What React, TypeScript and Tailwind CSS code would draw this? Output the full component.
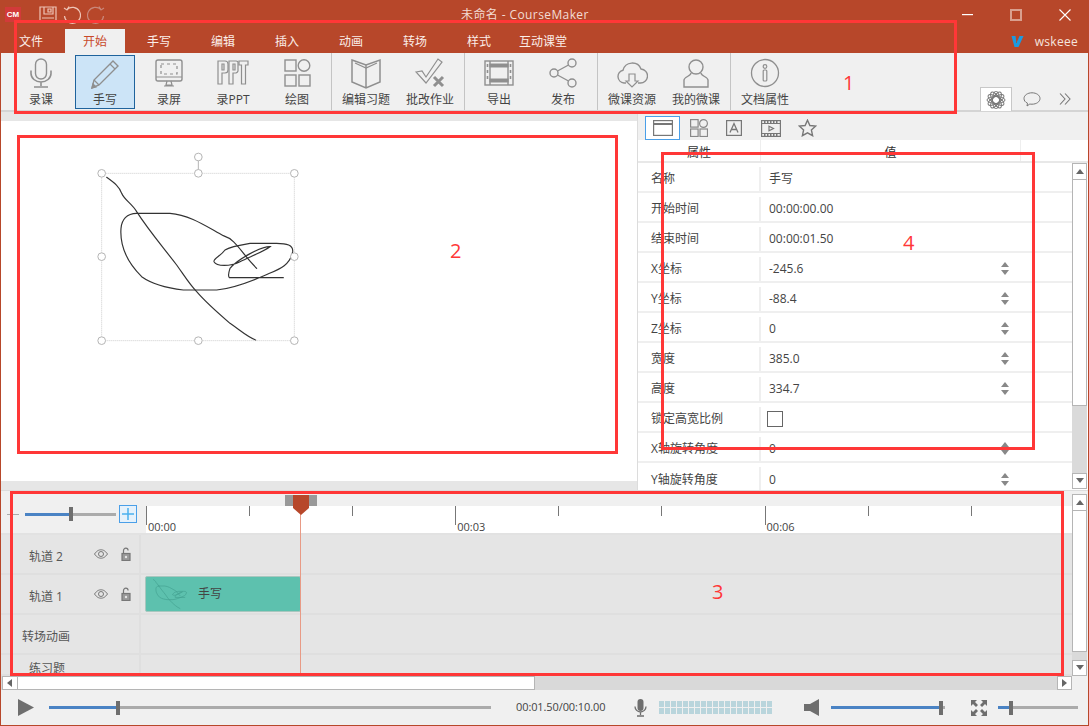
import React from "react";

const S = "#8f8f8f";
const Ico = ({ children, w = 32, h = 32, className = "" }: { children: React.ReactNode; w?: number; h?: number; className?: string }) => (
  <svg width={w} height={h} viewBox={`0 0 ${w} ${h}`} fill="none" stroke={S} strokeWidth="1.2" className={className}>{children}</svg>
);

const icons: Record<string, React.ReactNode> = {
  mic: <Ico><rect x="10.5" y="2" width="11" height="20" rx="5.5" strokeWidth="1.4" /><path d="M6 13.5v3a10 8.5 0 0 0 20 0v-3M16 25v4M9 30h14" strokeWidth="1.6" /></Ico>,
  pen: <Ico><path d="M3 31l2-8L24 4l5 5-19 19z" strokeWidth="1.4" /><path d="M21 7l5 5M5 23l5 5" /><path d="M3 31l1-4 3 3z" fill={S} /></Ico>,
  screen: <Ico><rect x="3" y="3" width="26" height="21" rx="2" strokeWidth="1.4" /><path d="M3 20h26M14 24l-1 4h6l-1-4M11 29h10" /><rect x="8" y="7" width="16" height="10" strokeDasharray="3 3" /></Ico>,
  ppt: <Ico><g transform="translate(1 4)"><path d="M0 0h7a3 3 0 0 1 3 3v6a3 3 0 0 1-3 3H4v11H0zM4 3v6h2V3z" /><path d="M11 0h7a3 3 0 0 1 2 1v9a3 3 0 0 1-2 2h-3v11h-4zM15 3v6h2V3z" /><path d="M21 0h9v4h-2.500v19h-4V4H21z" /></g></Ico>,
  draw: <Ico><rect x="4" y="3" width="11" height="11" strokeWidth="1.4" /><circle cx="23" cy="8.5" r="5.8" strokeWidth="1.4" /><rect x="4" y="18" width="11" height="11" strokeWidth="1.4" /><rect x="18" y="18" width="11" height="11" strokeWidth="1.4" /></Ico>,
  book: <Ico><path d="M2 3l14 5 14-5v22l-14 6-14-6zM16 8v23" strokeWidth="1.5" /><path d="M5 6l11 5 11-5" /></Ico>,
  check: <Ico><path d="M2 15l6-1 4 6L24 2l4 3-16 21z" strokeWidth="1.2" /><path d="M20 20l9 9M29 20l-9 9" strokeWidth="3" /></Ico>,
  film: <Ico><rect x="2" y="4" width="28" height="24" strokeWidth="1.4" /><path d="M7 4v24M25 4v24" strokeWidth="1.4" /><path d="M7 7h18v3H7z" fill={S} /><path d="M7 22h18v3H7z" fill={S} /><path d="M4.5 7v18M27.5 7v18" strokeDasharray="3 3" strokeWidth="1.6" /></Ico>,
  share: <Ico><circle cx="25" cy="6" r="4" strokeWidth="1.4" /><circle cx="7" cy="16" r="4" strokeWidth="1.4" /><circle cx="25" cy="26" r="4" strokeWidth="1.4" /><path d="M10.5 14l11-6M10.5 18l11 6" strokeWidth="1.4" /></Ico>,
  cloud: <Ico><path d="M10 26H8a6.5 6.5 0 0 1-1-12.8A9.5 9.5 0 0 1 25 12a7 7 0 0 1-1 14h-2" strokeWidth="1.4" /><path d="M13 17h6v7h3l-6 6-6-6h3z" strokeWidth="1.2" /></Ico>,
  user: <Ico><circle cx="16" cy="10" r="7" strokeWidth="1.4" /><path d="M11 16c0 3-7 4-7 7v7h24v-7c0-3-7-4-7-7" strokeWidth="1.4" /></Ico>,
  info: <Ico><circle cx="16" cy="16" r="13.5" strokeWidth="1.3" /><circle cx="16" cy="9.5" r="1.8" /><rect x="14.2" y="13" width="3.6" height="11" rx="1" /></Ico>,
};

const ribbonGroups = [
  [["mic", "录课"], ["pen", "手写"], ["screen", "录屏"], ["ppt", "录PPT"], ["draw", "绘图"]],
  [["book", "编辑习题"], ["check", "批改作业"]],
  [["film", "导出"], ["share", "发布"]],
  [["cloud", "微课资源"], ["user", "我的微课"]],
  [["info", "文档属性"]],
];

const rows: [string, string, boolean?][] = [
  ["名称", "手写"],
  ["开始时间", "00:00:00.00"],
  ["结束时间", "00:00:01.50"],
  ["X坐标", "-245.6", true],
  ["Y坐标", "-88.4", true],
  ["Z坐标", "0", true],
  ["宽度", "385.0", true],
  ["高度", "334.7", true],
  ["锁定高宽比例", "check"],
  ["X轴旋转角度", "0", true],
  ["Y轴旋转角度", "0", true],
];

const Tri = ({ dir, c = "#666" }: { dir: "u" | "d" | "l" | "r"; c?: string }) => {
  const p = { u: "0,6 4,1 8,6", d: "0,1 8,1 4,6", l: "6,0 6,8 1,4", r: "1,0 1,8 6,4" }[dir];
  return <svg width="8" height="8" viewBox="0 0 8 8"><polygon points={p} fill={c} /></svg>;
};

const SB = ({ dir, cls = "" }: { dir: "u" | "d" | "l" | "r"; cls?: string }) => (
  <div className={`bg-white border border-[#b5b5b5] flex items-center justify-center shrink-0 ${cls}`}><Tri dir={dir} /></div>
);

const VScroll = ({ thumb, track }: { thumb: string; track: string }) => (
  <div className="w-[15px] flex flex-col h-full shrink-0">
    <SB dir="u" cls="h-[17px]" />
    <div className={`bg-white border-x border-b border-[#b5b5b5] ${thumb}`} />
    <div className={`bg-[#dadada] ${track}`} />
    <SB dir="d" cls="h-[16px]" />
  </div>
);

const Slider = ({ w, pos, h = 3 }: { w: number; pos: number; h?: number }) => (
  <div className="flex items-center relative shrink-0" style={{ width: w, height: 14 }}>
    <div className="bg-[#4a83c4]" style={{ width: pos, height: h }} />
    <div className="bg-[#6e6e6e] w-[4px] h-[14px] shrink-0" />
    <div className="bg-[#ababab] flex-1" style={{ height: h }} />
  </div>
);

const Eye = () => (
  <svg width="14" height="10" viewBox="0 0 14 10" fill="none" stroke="#777" strokeWidth="1"><path d="M.5 5C3 1.5 5 .8 7 .8S11 1.5 13.500 5C11 8.500 9 9.200 7 9.200S3 8.500 .5 5z" /><circle cx="7" cy="5" r="2.500" /></svg>
);
const Lock = () => (
  <svg width="10" height="14" viewBox="0 0 10 14" fill="none" stroke="#777" strokeWidth="1.2"><path d="M2.500 6V3.500a2.300 2.300 0 0 1 4.600 0" /><rect x="1" y="6.500" width="8" height="7" fill="#999" stroke="#777" /><circle cx="5" cy="10" r="1.200" fill="#e5e5e5" stroke="none" /></svg>
);

const Track = ({ label, ctl, children, h = 40 }: { label: string; ctl?: boolean; children?: React.ReactNode; h?: number }) => (
  <div className="flex border-b-2 border-[#dfdfdf] shrink-0 overflow-hidden" style={{ height: h }}>
    <div className={`w-[140px] border-r-2 border-[#dfdfdf] shrink-0 flex items-center text-[12px] text-[#555] ${ctl ? "pl-[28px]" : "pl-[21px]"}`}>
      <span className={ctl ? "w-[65px] mt-[6px]" : label === "练习题" ? "pl-[7px] pt-[9px]" : "mt-[6px]"}>{label}</span>
      {ctl && <><Eye /><span className="ml-[13px] flex"><Lock /></span></>}
    </div>
    <div className="flex-1 flex items-center">{children}</div>
  </div>
);

const Handle = ({ cx, cy }: { cx: number; cy: number }) => <circle cx={cx} cy={cy} r="11.500" fill="white" stroke="#b5b5b5" strokeWidth="3" />;

const Sketch = ({ size = 1, op = 1, color = "#333" }: { size?: number; op?: number; color?: string }) => (
  <g fill="none" stroke={color} strokeWidth={3.5 * size} opacity={op} strokeLinecap="round">
    <path d="M50 97C75 115 88 125 95 145C103 165 125 175 140 200C175 255 210 295 260 360C285 395 300 420 320 440C350 475 385 505 420 535C450 555 470 575 497 585" />
    <path d="M140 205C110 205 95 225 93 250C90 290 100 340 155 395C190 420 240 430 280 435L380 435C430 430 480 410 520 393C560 375 600 365 608 320C610 300 590 295 560 295L480 295C450 300 420 305 405 315C390 335 370 340 372 350C380 365 420 365 450 350C480 335 520 320 540 305C510 305 440 345 420 370C415 385 415 395 418 398L580 398" />
    <path d="M140 205L240 205C300 210 350 245 400 272C440 285 450 320 500 370" />
  </g>
);

export default function App() {
  return (
    <div className="w-[1089px] h-[726px] relative flex flex-col border-x border-b border-[#b7472a] bg-[#f0f0f0] overflow-hidden text-[#444] font-['Open_Sans','Noto_Sans_CJK_SC',sans-serif] text-[12px]">
      {/* title bar */}
      <div className="h-[29px] bg-[#b7472a] flex items-center text-white shrink-0 relative">
        <div className="ml-[4px] w-[16px] h-[15px] bg-[#d23a3a] flex items-center justify-center text-[8px] font-bold font-['Liberation_Sans',sans-serif] text-white leading-none">CM</div>
        <svg width="18" height="18" viewBox="0 0 18 18" fill="none" stroke="#eec4b6" strokeWidth="1.2" className="ml-[18px]"><path d="M1 1h16v15H1z" /><path d="M5 1v7h9V1M9 3h3v3H9zM3 12h12M3 14.500h12" /></svg>
        <svg width="18" height="18" viewBox="0 0 18 18" fill="none" stroke="#eec4b6" strokeWidth="1.2" className="ml-[6px]"><path d="M4 3.500A8 8 0 1 1 1.500 10" /><path d="M1 2l3 2 2-3.500" /></svg>
        <svg width="18" height="18" viewBox="0 0 18 18" fill="none" stroke="#c9877a" strokeWidth="1.2" className="ml-[6px]"><path d="M14 3.500A8 8 0 1 0 16.500 10" /><path d="M17 2l-3 2-2-3.500" /></svg>
        <div className="flex-1" />
        <svg width="11" height="2" viewBox="0 0 11 2" className="mr-[37px]"><rect width="11" height="1.200" fill="#fff" /></svg>
        <div className="w-[12px] h-[12px] border-2 border-[#d99f8e] mr-[37px]" />
        <svg width="12" height="12" viewBox="0 0 12 12" stroke="#fff" strokeWidth="1.100" className="mr-[17px]"><path d="M.5.5l11 11M11.500.5l-11 11" /></svg>
        <span className="absolute left-[460px] top-[6px] text-[12px] text-[#f3dcd4] leading-[18px] tracking-[0.4px]">未命名 - CourseMaker</span>
      </div>
      {/* tabs */}
      <div className="h-[24px] bg-[#b7472a] flex items-stretch gap-1 shrink-0 text-[#fbeee9] text-[12px]">
        {["文件", "开始", "手写", "编辑", "插入", "动画", "转场", "样式", "互动课堂"].map((t, i) => (
          <div key={t} className={`w-[60px] flex items-center justify-center pt-[2px] ${i === 1 ? "bg-[#f0f0f0] text-[#c8492a]" : ""}`}>{t}</div>
        ))}
        <div className="flex-1" />
        <svg width="13" height="13" viewBox="0 0 12 13" className="self-center mr-[7px] mt-[1px]"><path d="M0 1h4l1 7L8 1h4L7 12H3z" fill="#1d9ae0" /></svg>
        <span className="self-center mr-[10px] text-[12px] text-[#f5e4de] tracking-[0.3px] mt-[2px]">wskeee</span>
      </div>
      {/* ribbon */}
      <div className="h-[59px] flex shrink-0 border-b-2 border-[#d4d4d4] pl-[10px]">
        {ribbonGroups.map((g, gi) => (
          <div key={gi} className={`flex gap-1 pt-[2px] pb-[1px] pr-[4px] ${gi < 4 ? "border-r border-[#c4c4c4] mr-[4px]" : ""}`}>
            {g.map(([ic, l]) => {
              const sel = l === "手写";
              return (
                <div key={l} className={`w-[60px] flex flex-col items-center border ${sel ? "bg-[#cce4f7] border-[#1f639c]" : "border-transparent"}`}>
                  <div className="h-[31px] flex items-center justify-center mt-[1px]">{icons[ic]}</div>
                  <span className="leading-[16px] text-[12px] text-[#444] whitespace-nowrap mt-[4px]">{l}</span>
                </div>
              );
            })}
          </div>
        ))}
        <div className="flex-1" />
        <div className="flex items-end shrink-0 pb-0 -mb-[1px]">
          <div className="w-[32px] h-[24px] bg-white border border-b-0 border-[#c8c8c8] flex items-center justify-center">
            <svg width="20" height="18" viewBox="0 0 20 18" fill="none" stroke="#777" strokeWidth="1"><ellipse cx="10" cy="9" rx="9" ry="3.500" /><ellipse cx="10" cy="9" rx="9" ry="3.500" transform="rotate(60 10 9)" /><ellipse cx="10" cy="9" rx="9" ry="3.500" transform="rotate(120 10 9)" /><ellipse cx="10" cy="9" rx="9" ry="3.500" transform="rotate(30 10 9)" /><ellipse cx="10" cy="9" rx="9" ry="3.500" transform="rotate(90 10 9)" /><ellipse cx="10" cy="9" rx="9" ry="3.500" transform="rotate(150 10 9)" /></svg>
          </div>
          <svg width="18" height="15" viewBox="0 0 18 15" fill="none" stroke="#777" strokeWidth="1" className="ml-[11px] mb-[4px]"><path d="M9 .8c4.500 0 8 2.500 8 5.700s-3.500 5.700-8 5.700c-.8 0-1.500 0-2.200-.2L4 14l.5-2.800C2.200 10.200 1 8.500 1 6.500 1 3.300 4.500.8 9 .8z" /></svg>
          <svg width="12" height="12" viewBox="0 0 12 12" fill="none" stroke="#777" strokeWidth="1.100" className="ml-[18px] mb-[6px] mr-[17px]"><path d="M1 .5L6 6 1 11.500M6 .5L11 6 6 11.500" /></svg>
        </div>
      </div>
      {/* main */}
      <div className="h-[378px] flex shrink-0">
        <div className="w-[637px] flex flex-col shrink-0 bg-[#e6e6e6] border-r border-[#dcdcdc] pt-[9px] pb-[9px]">
          <div className="flex-1 bg-white pl-[89px] pt-[24px]">
            <svg width="220" height="205" viewBox="0 0 660 615">
              <rect x="35" y="85" width="578" height="502" fill="none" stroke="#ccc" strokeWidth="3" strokeDasharray="3 3" />
              <line x1="325" y1="36" x2="325" y2="85" stroke="#b5b5b5" strokeWidth="3" />
              <Sketch />
              <Handle cx={35} cy={85} /><Handle cx={325} cy={85} /><Handle cx={613} cy={85} />
              <Handle cx={35} cy={335} /><Handle cx={613} cy={335} />
              <Handle cx={35} cy={587} /><Handle cx={325} cy={587} /><Handle cx={613} cy={587} />
              <Handle cx={325} cy={36} />
            </svg>
          </div>
        </div>
        <div className="flex-1 flex flex-col min-w-0">
          <div className="h-[28px] flex items-end pl-[7px] shrink-0">
            <div className="w-[35px] h-[24px] bg-white border border-[#4a9fe8] flex items-center justify-center mb-0">
              <svg width="20" height="16" viewBox="0 0 20 16" fill="none" stroke="#777" strokeWidth="1.200"><rect x=".6" y=".6" width="18.800" height="14.800" /><path d="M.6 4h18.800" strokeWidth="2" /></svg>
            </div>
            <svg width="18" height="18" viewBox="0 0 18 18" fill="none" stroke="#888" strokeWidth="1.200" className="ml-[10px] mb-[3px]"><rect x=".6" y=".6" width="7.500" height="7.500" /><circle cx="13.500" cy="4.500" r="3.900" /><rect x=".6" y="10" width="7.500" height="7.500" /><rect x="10" y="10" width="7.500" height="7.500" /></svg>
            <svg width="16" height="16" viewBox="0 0 16 16" className="ml-[18px] mb-[4px]"><rect x=".6" y=".6" width="14.800" height="14.800" fill="none" stroke="#777" strokeWidth="1.200" /><path d="M4 12.500L8 3.500l4 9M5.500 9.500h5" fill="none" stroke="#777" strokeWidth="1.300" /></svg>
            <svg width="20" height="17" viewBox="0 0 20 17" fill="none" stroke="#777" strokeWidth="1.200" className="ml-[19px] mb-[3px]"><rect x=".6" y=".6" width="18.800" height="15.800" /><path d="M.6 3.500h18.800M.6 13.500h18.800" /><path d="M3 2h14M3 15h14" strokeDasharray="1.500 1.500" strokeWidth="2" /><path d="M8 6.200l4.500 2.300L8 10.800z" /></svg>
            <svg width="19" height="18" viewBox="0 0 19 18" fill="none" stroke="#777" strokeWidth="1.400" className="ml-[17px] mb-[3px]"><path d="M9.500 1.200l2.400 5.300 5.800.6-4.300 3.900 1.200 5.700-5.100-2.900-5.100 2.900 1.200-5.700L1.300 7.100l5.800-.6z" /></svg>
          </div>
          <div className="flex-1 bg-white flex flex-col min-h-0">
            <div className="h-[23px] flex shrink-0 border-b-2 border-[#e8e8e8] text-[12px] text-[#333]">
              <div className="w-[123px] text-center leading-[22px] border-r border-[#eee] pt-[2px]">属性</div>
              <div className="w-[260px] text-center leading-[22px] border-r border-[#eee] pt-[2px]">值</div>
            </div>
            <div className="flex-1 flex min-h-0 overflow-hidden">
              <div className="flex-1 flex flex-col min-w-0">
                {rows.map(([k, v, spin], i) => (
                  <div key={k} className={`h-[30px] shrink-0 flex items-center pt-[4px] ${i < 10 ? "border-b-2 border-[#efefef]" : ""}`}>
                    <div className="w-[123px] pl-[13px] h-full flex items-center border-r-2 border-[#efefef] shrink-0">{k}</div>
                    {v === "check" ? (
                      <div className="ml-[6px] w-[16px] h-[16px] border border-[#666] bg-white" />
                    ) : (
                      <div className="pl-[8px] w-[242px] text-[#444]">{v}</div>
                    )}
                    {spin && <div className="flex flex-col items-center -space-y-[0.5px] w-[8px] ml-[-2px]"><Tri dir="u" c="#888" /><Tri dir="d" c="#888" /></div>}
                  </div>
                ))}
              </div>
              <div className="mr-[1px]"><VScroll thumb="h-[226px]" track="h-[67px]" /></div>
            </div>
          </div>
        </div>
      </div>
      {/* timeline */}
      <div className="h-[186px] flex shrink-0 relative border-t border-[#dcdcdc]">
        <div className="flex-1 flex flex-col min-w-0 bg-[#e5e5e5]">
          <div className="h-[44px] flex shrink-0 bg-[#f0f0f0] border-b-2 border-[#e2e2e2]">
            <div className="w-[145px] flex items-center shrink-0 pl-[6px] pt-[4px]">
              <div className="w-[12px] h-px bg-[#aaa]" />
              <div className="ml-[6px]"><Slider w={91} pos={44} /></div>
              <div className="ml-[3px] w-[18px] h-[18px] border border-[#4a9fe8] bg-[#e5f1fb] flex items-center justify-center">
                <svg width="12" height="12" viewBox="0 0 12 12" stroke="#4ab0ee" strokeWidth="1.500"><path d="M6 0v12M0 6h12" /></svg>
              </div>
            </div>
            <div className="flex-1 flex flex-col pt-[15px] min-w-0">
              <div className="flex-1 bg-white flex overflow-hidden">
                {["00:00", "", "", "00:03", "", "", "00:06", "", ""].map((t, i) => (
                  <div key={i} className="w-[103.100px] shrink-0 flex items-start">
                    <div className={`w-px bg-[#777] ${t ? "h-[19px]" : "h-[10px]"}`} />
                    {t && <span className="mt-[13px] ml-[1px] text-[11px] leading-[15px] text-[#444]">{t}</span>}
                  </div>
                ))}
              </div>
            </div>
          </div>
          <Track label="轨道 2" ctl />
          <Track label="轨道 1" ctl>
            <div className="ml-[4px] w-[156px] h-[36px] bg-[#5dc1ae] border border-[#a9c7bf] rounded-[2px] flex items-center">
              <svg width="36" height="32" viewBox="30 70 600 540" className="ml-[6px] shrink-0"><Sketch size={3} op={0.55} color="#2c8576" /></svg>
              <span className="ml-[10px] text-[#444]">手写</span>
            </div>
          </Track>
          <Track label="转场动画" />
          <Track label="练习题" h={21} />
        </div>
        <div className="mr-[1px] pt-[3px] bg-[#f0f0f0]"><VScroll thumb="h-[141px]" track="h-[8px]" /></div>
        {/* playhead */}
        <div className="absolute left-[299px] top-[19px] bottom-0 w-px bg-[#e89a85]" />
        <div className="absolute left-[284px] top-[4px] w-[32px] h-[11px] bg-[#999]" />
        <svg width="16" height="20" viewBox="0 0 16 20" className="absolute left-[292px] top-[4px]"><polygon points="0,0 16,0 16,13 8,20 0,13" fill="#b7472a" /></svg>
      </div>
      {/* h scroll */}
      <div className="h-[14px] flex shrink-0 bg-[#d9d9d9] mr-[16px] pl-px">
        <SB dir="l" cls="w-[16px]" />
        <div className="w-[517px] bg-white border-y border-r border-[#b5b5b5]" />
        <div className="flex-1" />
        <SB dir="r" cls="w-[15px]" />
      </div>
      <div className="flex-1 flex items-center pl-[17px]">
        <svg width="16" height="17" viewBox="0 0 16 17"><polygon points="0,0 16,8.500 0,17" fill="#6e6e6e" /></svg>
        <div className="ml-[15px]"><Slider w={442} pos={67} /></div>
        <span className="ml-[25px] w-[89px] text-[11px] text-[#444] whitespace-nowrap tracking-[-0.1px]">00:01.50/00:10.00</span>
        <svg width="13" height="18" viewBox="0 0 13 18" className="ml-[29px]"><rect x="3.500" width="6" height="12" rx="3" fill="#6e6e6e" /><path d="M1 7.500a5.500 5.500 0 0 0 11 0M6.500 13v3M3 17h7" fill="none" stroke="#6e6e6e" strokeWidth="1.300" /></svg>
        <div className="ml-[12px] w-[115px] grid grid-cols-[repeat(19,5px)] gap-[1px]">
          {Array.from({ length: 38 }).map((_, i) => <div key={i} className="h-[6px] bg-[#b9d5dc]" />)}
        </div>
        <svg width="15" height="17" viewBox="0 0 15 17" className="ml-[30px]"><polygon points="0,5 6,5 15,0 15,17 6,12 0,12" fill="#6e6e6e" /></svg>
        <div className="ml-[12px]"><Slider w={114} pos={108} /></div>
        <svg width="16" height="16" viewBox="0 0 16 16" className="ml-[26px]" fill="#6e6e6e"><path d="M0 0h6L4 2l3 3-2 2-3-3-2 2zM16 0v6l-2-2-3 3-2-2 3-3-2-2zM0 16v-6l2 2 3-3 2 2-3 3 2 2zM16 16h-6l2-2-3-3 2-2 3 3 2-2z" /></svg>
        <div className="ml-[11px]"><Slider w={80} pos={11} /></div>
      </div>
      {/* annotations */}
      <div className="absolute left-[13px] top-[20px] w-[943px] h-[94px] border-[3px] border-[#ff3737] pointer-events-none" />
      <div className="absolute left-[16px] top-[135px] w-[601px] h-[319px] border-[3px] border-[#ff3737] pointer-events-none" />
      <div className="absolute left-[9px] top-[491px] w-[1054px] h-[185px] border-[3px] border-[#ff3737] pointer-events-none" />
      <div className="absolute left-[660px] top-[152px] w-[374px] h-[298px] border-[3px] border-[#ff3737] pointer-events-none" />
      <span className="absolute left-[842px] top-[69px] text-[20px] leading-[28px] text-[#ff3737]">1</span>
      <span className="absolute left-[449px] top-[237px] text-[20px] leading-[28px] text-[#ff3737]">2</span>
      <span className="absolute left-[711px] top-[578px] text-[20px] leading-[28px] text-[#ff3737]">3</span>
      <span className="absolute left-[902px] top-[229px] text-[20px] leading-[28px] text-[#ff3737]">4</span>
    </div>
  );
}
